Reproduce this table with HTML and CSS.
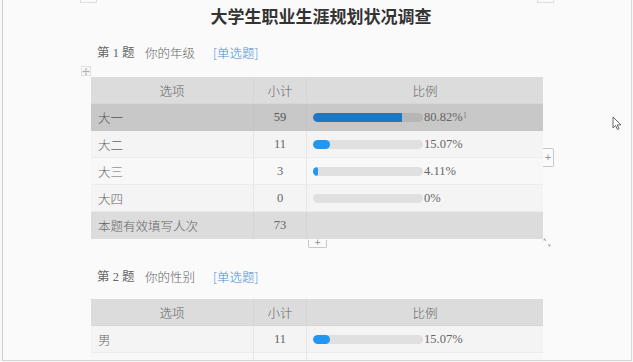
FILE: index.html
```html
<!DOCTYPE html>
<html lang="zh-CN">
<head>
<meta charset="utf-8">
<title>大学生职业生涯规划状况调查</title>
<link rel="stylesheet" href="styles.css">
</head>
<body>
<div class="frame">
  <div class="marks"><span class="mark mark-l"></span><span class="mark mark-r"></span></div>
  <h1 class="title">大学生职业生涯规划状况调查</h1>

  <div class="q"><span class="qno">第 1 题</span><span class="qtext">你的年级</span><span class="qtype">[单选题]</span></div>
  <div class="tablewrap">
    <span class="move"><svg width="9" height="9" viewBox="0 0 9 9"><path d="M4.5 1v7M1 4.5h7M3.5 2l1-1 1 1M3.5 7l1 1 1-1M2 3.5l-1 1 1 1M7 3.5l1 1-1 1" fill="none" stroke="#999" stroke-width="0.8"/></svg></span>
    <div class="grid">
      <div class="row head"><div class="c c1">选项</div><div class="c c2">小计</div><div class="c c3">比例</div></div>
      <div class="row sel"><div class="c c1 l">大一</div><div class="c c2">59</div><div class="c c3 l"><span class="bar"><span class="fill" style="width:80.82%"></span></span><span class="pct">80.82%</span><span class="caret">I</span></div></div>
      <div class="row r1"><div class="c c1 l">大二</div><div class="c c2">11</div><div class="c c3 l"><span class="bar"><span class="fill" style="width:15.07%"></span></span><span class="pct">15.07%</span></div></div>
      <div class="row r2"><div class="c c1 l">大三</div><div class="c c2">3</div><div class="c c3 l"><span class="bar"><span class="fill" style="width:4.11%"></span></span><span class="pct">4.11%</span></div></div>
      <div class="row r1"><div class="c c1 l">大四</div><div class="c c2">0</div><div class="c c3 l"><span class="bar"></span><span class="pct">0%</span></div></div>
      <div class="row total"><div class="c c1 l">本题有效填写人次</div><div class="c c2">73</div><div class="c c3"></div></div>
    </div>
    <span class="addcol">+</span>
    <span class="addrow">+</span>
    <span class="resize"><svg width="8" height="9" viewBox="0 0 8 9"><path d="M1 1l2 2M1 1h1.5M1 1v1.5M7 8l-2-2M7 8H5.5M7 8V6.5" fill="none" stroke="#999" stroke-width="0.8"/></svg></span>
  </div>

  <div class="q q2"><span class="qno">第 2 题</span><span class="qtext">你的性别</span><span class="qtype">[单选题]</span></div>
  <div class="tablewrap t2">
    <div class="grid">
      <div class="row head"><div class="c c1">选项</div><div class="c c2">小计</div><div class="c c3">比例</div></div>
      <div class="row r1"><div class="c c1 l">男</div><div class="c c2">11</div><div class="c c3 l"><span class="bar"><span class="fill" style="width:15.07%"></span></span><span class="pct">15.07%</span></div></div>
      <div class="row r2"><div class="c c1 l"></div><div class="c c2"></div><div class="c c3"></div></div>
    </div>
  </div>

  <span class="cursor"><svg width="10" height="14" viewBox="0 0 10 14"><path d="M1 1v11l2.6-2.5 1.8 4 1.6-.7-1.8-3.9H9z" fill="#fff" stroke="#666" stroke-width="1"/></svg></span>
</div>
</body>
</html>
```

FILE: styles.css
```css
* { box-sizing: border-box; }
html, body { margin: 0; padding: 0; }
body {
  background: #f7f7f7;
  font-family: "Liberation Serif", "Noto Sans CJK SC", serif;
  color: #666;
}
.frame {
  position: relative;
  margin-left: 2px;
  width: 630px;
  height: 361px;
  background: #fafafa;
  border-left: 1px solid #cfcfcf;
  border-right: 1px solid #d6d6d6;
  border-bottom: 1px solid #d4d4d4;
  overflow: hidden;
}
.marks { display: flex; height: 3px; }
.mark {
  display: block;
  height: 3px;
  width: 17px;
  border: 1px solid #dedede;
  border-top: none;
}
.mark-l { margin-left: 77px; }
.mark-r { margin-left: 440px; }
.title {
  margin: 3px 0 0;
  text-align: center;
  font-family: "Noto Sans CJK SC", sans-serif;
  font-size: 17px;
  line-height: 20px;
  font-weight: 700;
  color: #333;
  letter-spacing: 0px;
  padding-left: 8px;
}
.q {
  margin-top: 18px;
  padding-left: 94px;
  height: 18px;
  line-height: 18px;
  font-size: 12.5px;
  color: #666;
  display: flex;
}
.q2 { margin-top: 29px; }
.qno { width: 48px; }
.qtext { width: 68px; font-family: "Noto Sans CJK SC", sans-serif; font-weight: 300; }
.qtype { color: #4a8fd8; font-family: "Noto Sans CJK SC", sans-serif; font-weight: 300; }
.qno { font-family: "Liberation Serif", "Noto Sans CJK SC", serif; }
.tablewrap {
  position: relative;
  margin-top: 15px;
  margin-left: 88px;
  width: 452px;
}
.t2 { margin-top: 13px; }
.grid { display: flex; flex-direction: column; }
.row {
  display: grid;
  grid-template-columns: 163px 53px 236px;
  height: 27px;
  background: #f5f5f5;
}
.row .c {
  display: flex;
  align-items: center;
  justify-content: center;
  font-size: 12.5px;
  border-right: 1px solid #e6e6e6;
  border-bottom: 1px solid #ececec;
  font-weight: 300;
}
.row .c.l { justify-content: flex-start; padding-left: 7px; }
.row .c3.l { padding-left: 6px; }
.row .c3 { border-right: none; }
.c1 { font-family: "Noto Sans CJK SC", sans-serif; }
.head { background: #dcdcdc; color: #666; }
.head .c { border-color: #d6d6d6; font-family: "Noto Sans CJK SC", sans-serif; }
.sel { background: #c8c8c8; color: #555; }
.sel .c { border-color: #c4c4c4; }
.r1 { background: #f4f4f4; }
.r2 { background: #f8f8f8; }
.total { background: #dcdcdc; }
.total .c { border-color: #d6d6d6; border-bottom: none; }
.bar {
  position: relative;
  display: block;
  flex: none;
  width: 110px;
  height: 9px;
  border-radius: 5px;
  background: #e0e0e0;
  overflow: hidden;
}
.fill {
  display: block;
  height: 100%;
  background: #2196f3;
  border-radius: 5px;
}
.sel .bar { background: #b6b6b6; }
.sel .fill { background: #1e77c2; border-radius: 5px 0 0 5px; }
.pct { margin-left: 1px; font-size: 12.5px; color: #666; }
.caret { font-size: 9px; color: #888; margin-left: 1px; margin-top: -4px; }
.move {
  position: absolute;
  left: -10px;
  top: -11px;
  width: 10px;
  height: 10px;
  border: 1px solid #e0e0e0;
  display: flex;
  align-items: center;
  justify-content: center;
}
.addcol {
  position: absolute;
  left: 452px;
  top: 71px;
  width: 11px;
  height: 19px;
  border: 1px solid #c8c8c8;
  border-left: none;
  border-radius: 0 2px 2px 0;
  font: 9px/17px "DejaVu Sans", sans-serif;
  color: #888;
  text-align: center;
  background: #fafafa;
}
.addrow {
  position: absolute;
  left: 217px;
  top: 163px;
  width: 19px;
  height: 8px;
  border: 1px solid #c8c8c8;
  border-top: none;
  border-radius: 0 0 2px 2px;
  font: 8px/6px "DejaVu Sans", sans-serif;
  color: #888;
  text-align: center;
  background: #fafafa;
}
.resize {
  position: absolute;
  left: 452px;
  top: 161px;
  width: 8px;
  height: 9px;
  display: flex;
}
.cursor {
  position: absolute;
  left: 609px;
  top: 116px;
  display: flex;
}
```
